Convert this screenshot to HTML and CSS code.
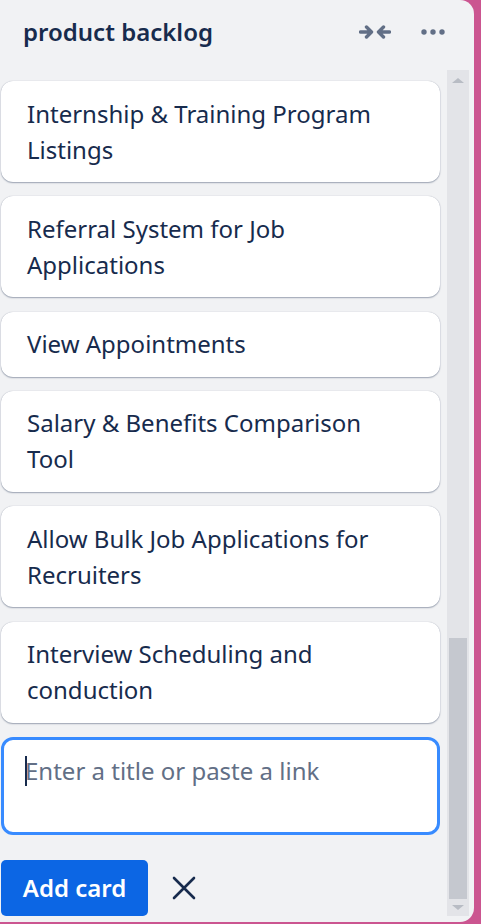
FILE: index.html
```html
<!DOCTYPE html>
<html>
<head>
<meta charset="utf-8">
<link rel="stylesheet" href="styles.css">
</head>
<body>
<div class="list">
  <div class="list-header">
    <h2 class="list-title">product backlog</h2>
    <div class="header-actions">
      <span class="icon-btn collapse">
        <svg width="32" height="16" viewBox="0 0 32 16">
          <path d="M1.5 8H12M7.5 3L12.5 8L7.5 13" fill="none" stroke="#626f86" stroke-width="3.4" stroke-linecap="round" stroke-linejoin="round"/>
          <path d="M30.5 8H20M24.5 3L19.5 8L24.5 13" fill="none" stroke="#626f86" stroke-width="3.4" stroke-linecap="round" stroke-linejoin="round"/>
        </svg>
      </span>
      <span class="icon-btn more">
        <svg width="24" height="6" viewBox="0 0 24 6">
          <circle cx="3" cy="3" r="2.7" fill="#626f86"/>
          <circle cx="12" cy="3" r="2.7" fill="#626f86"/>
          <circle cx="21" cy="3" r="2.7" fill="#626f86"/>
        </svg>
      </span>
    </div>
  </div>
  <div class="list-body">
    <div class="cards">
      <div class="card">Internship &amp; Training Program Listings</div>
      <div class="card">Referral System for Job Applications</div>
      <div class="card">View Appointments</div>
      <div class="card">Salary &amp; Benefits Comparison Tool</div>
      <div class="card">Allow Bulk Job Applications for Recruiters</div>
      <div class="card">Interview Scheduling and conduction</div>
      <div class="composer">
        <span class="caret"></span>
        <span class="placeholder">Enter a title or paste a link</span>
      </div>
      <div class="composer-actions">
        <button class="add-btn">Add card</button>
        <span class="close-btn">
          <svg width="24" height="24" viewBox="0 0 24 24">
            <path d="M2 2L22 22M22 2L2 22" stroke="#172b4d" stroke-width="2.6" stroke-linecap="round"/>
          </svg>
        </span>
      </div>
    </div>
    <div class="scrollbar">
      <span class="arrow up"></span>
      <div class="thumb-space"></div>
      <div class="thumb"></div>
      <span class="arrow down"></span>
    </div>
  </div>
</div>
</body>
</html>
```

FILE: styles.css
```css
html, body {
  margin: 0;
  padding: 0;
}
body {
  background: #cb5590;
  width: 481px;
  height: 924px;
  overflow: hidden;
  font-family: "Noto Sans", "Open Sans", sans-serif;
  color: #172b4d;
}
.list {
  width: 474px;
  height: 922px;
  background: #f1f2f4;
  border-radius: 0 14px 14px 0;
  display: flex;
  flex-direction: column;
  overflow: hidden;
}
.list-header {
  height: 70px;
  display: flex;
  align-items: flex-start;
  justify-content: space-between;
  box-sizing: border-box;
  padding: 13px 29px 0 23px;
}
.list-title {
  margin: 0;
  font-size: 24px;
  font-weight: 600;
  line-height: 38px;
  color: #172b4d;
}
.header-actions {
  display: flex;
  align-items: center;
  gap: 30px;
  height: 38px;
}
.icon-btn {
  display: flex;
  align-items: center;
}
.list-body {
  flex: 1;
  display: flex;
  gap: 7px;
  padding-right: 5px;
}
.cards {
  width: 439px;
  margin-left: 1px;
  padding-top: 11px;
  display: flex;
  flex-direction: column;
  gap: 14.33px;
}
.card {
  background: #fff;
  border-radius: 12px;
  box-shadow: 0 1px 1.5px rgba(9, 30, 66, 0.35), 0 0 1px rgba(9, 30, 66, 0.3);
  padding: 14.5px 45px 14.5px 26px;
  font-size: 24px;
  line-height: 36px;
  color: #172b4d;
}
.composer {
  height: 98px;
  box-sizing: border-box;
  border: 3px solid #388bff;
  border-radius: 12px;
  background: #fff;
  padding: 13px 20px 0 21px;
  display: flex;
  align-items: flex-start;
  font-size: 24px;
  line-height: 36px;
}
.caret {
  width: 2px;
  height: 30px;
  margin-top: 3px;
  background: #172b4d;
  margin-right: -2px;
}
.placeholder {
  color: #626f86;
}
.composer-actions {
  display: flex;
  align-items: center;
  gap: 24px;
  margin-top: 10.5px;
}
.add-btn {
  border: none;
  background: #0c66e4;
  color: #fff;
  font-family: "Noto Sans", "Open Sans", sans-serif;
  font-weight: 600;
  font-size: 24px;
  height: 56px;
  width: 147px;
  border-radius: 5px;
  padding: 0;
}
.close-btn {
  display: flex;
}
.scrollbar {
  width: 22px;
  margin-bottom: 6px;
  background: #e3e4e8;
  display: flex;
  flex-direction: column;
  align-items: center;
}
.thumb-space {
  flex: 1;
}
.thumb {
  width: 18px;
  height: 261px;
  background: #c5c8cf;
}
.arrow {
  width: 0;
  height: 0;
  border-left: 6px solid transparent;
  border-right: 6px solid transparent;
  margin: 8px 0;
}
.arrow.up {
  border-bottom: 5px solid #b8bcc4;
}
.arrow.down {
  border-top: 5px solid #b8bcc4;
  margin: 6px 0 6px;
}
```
